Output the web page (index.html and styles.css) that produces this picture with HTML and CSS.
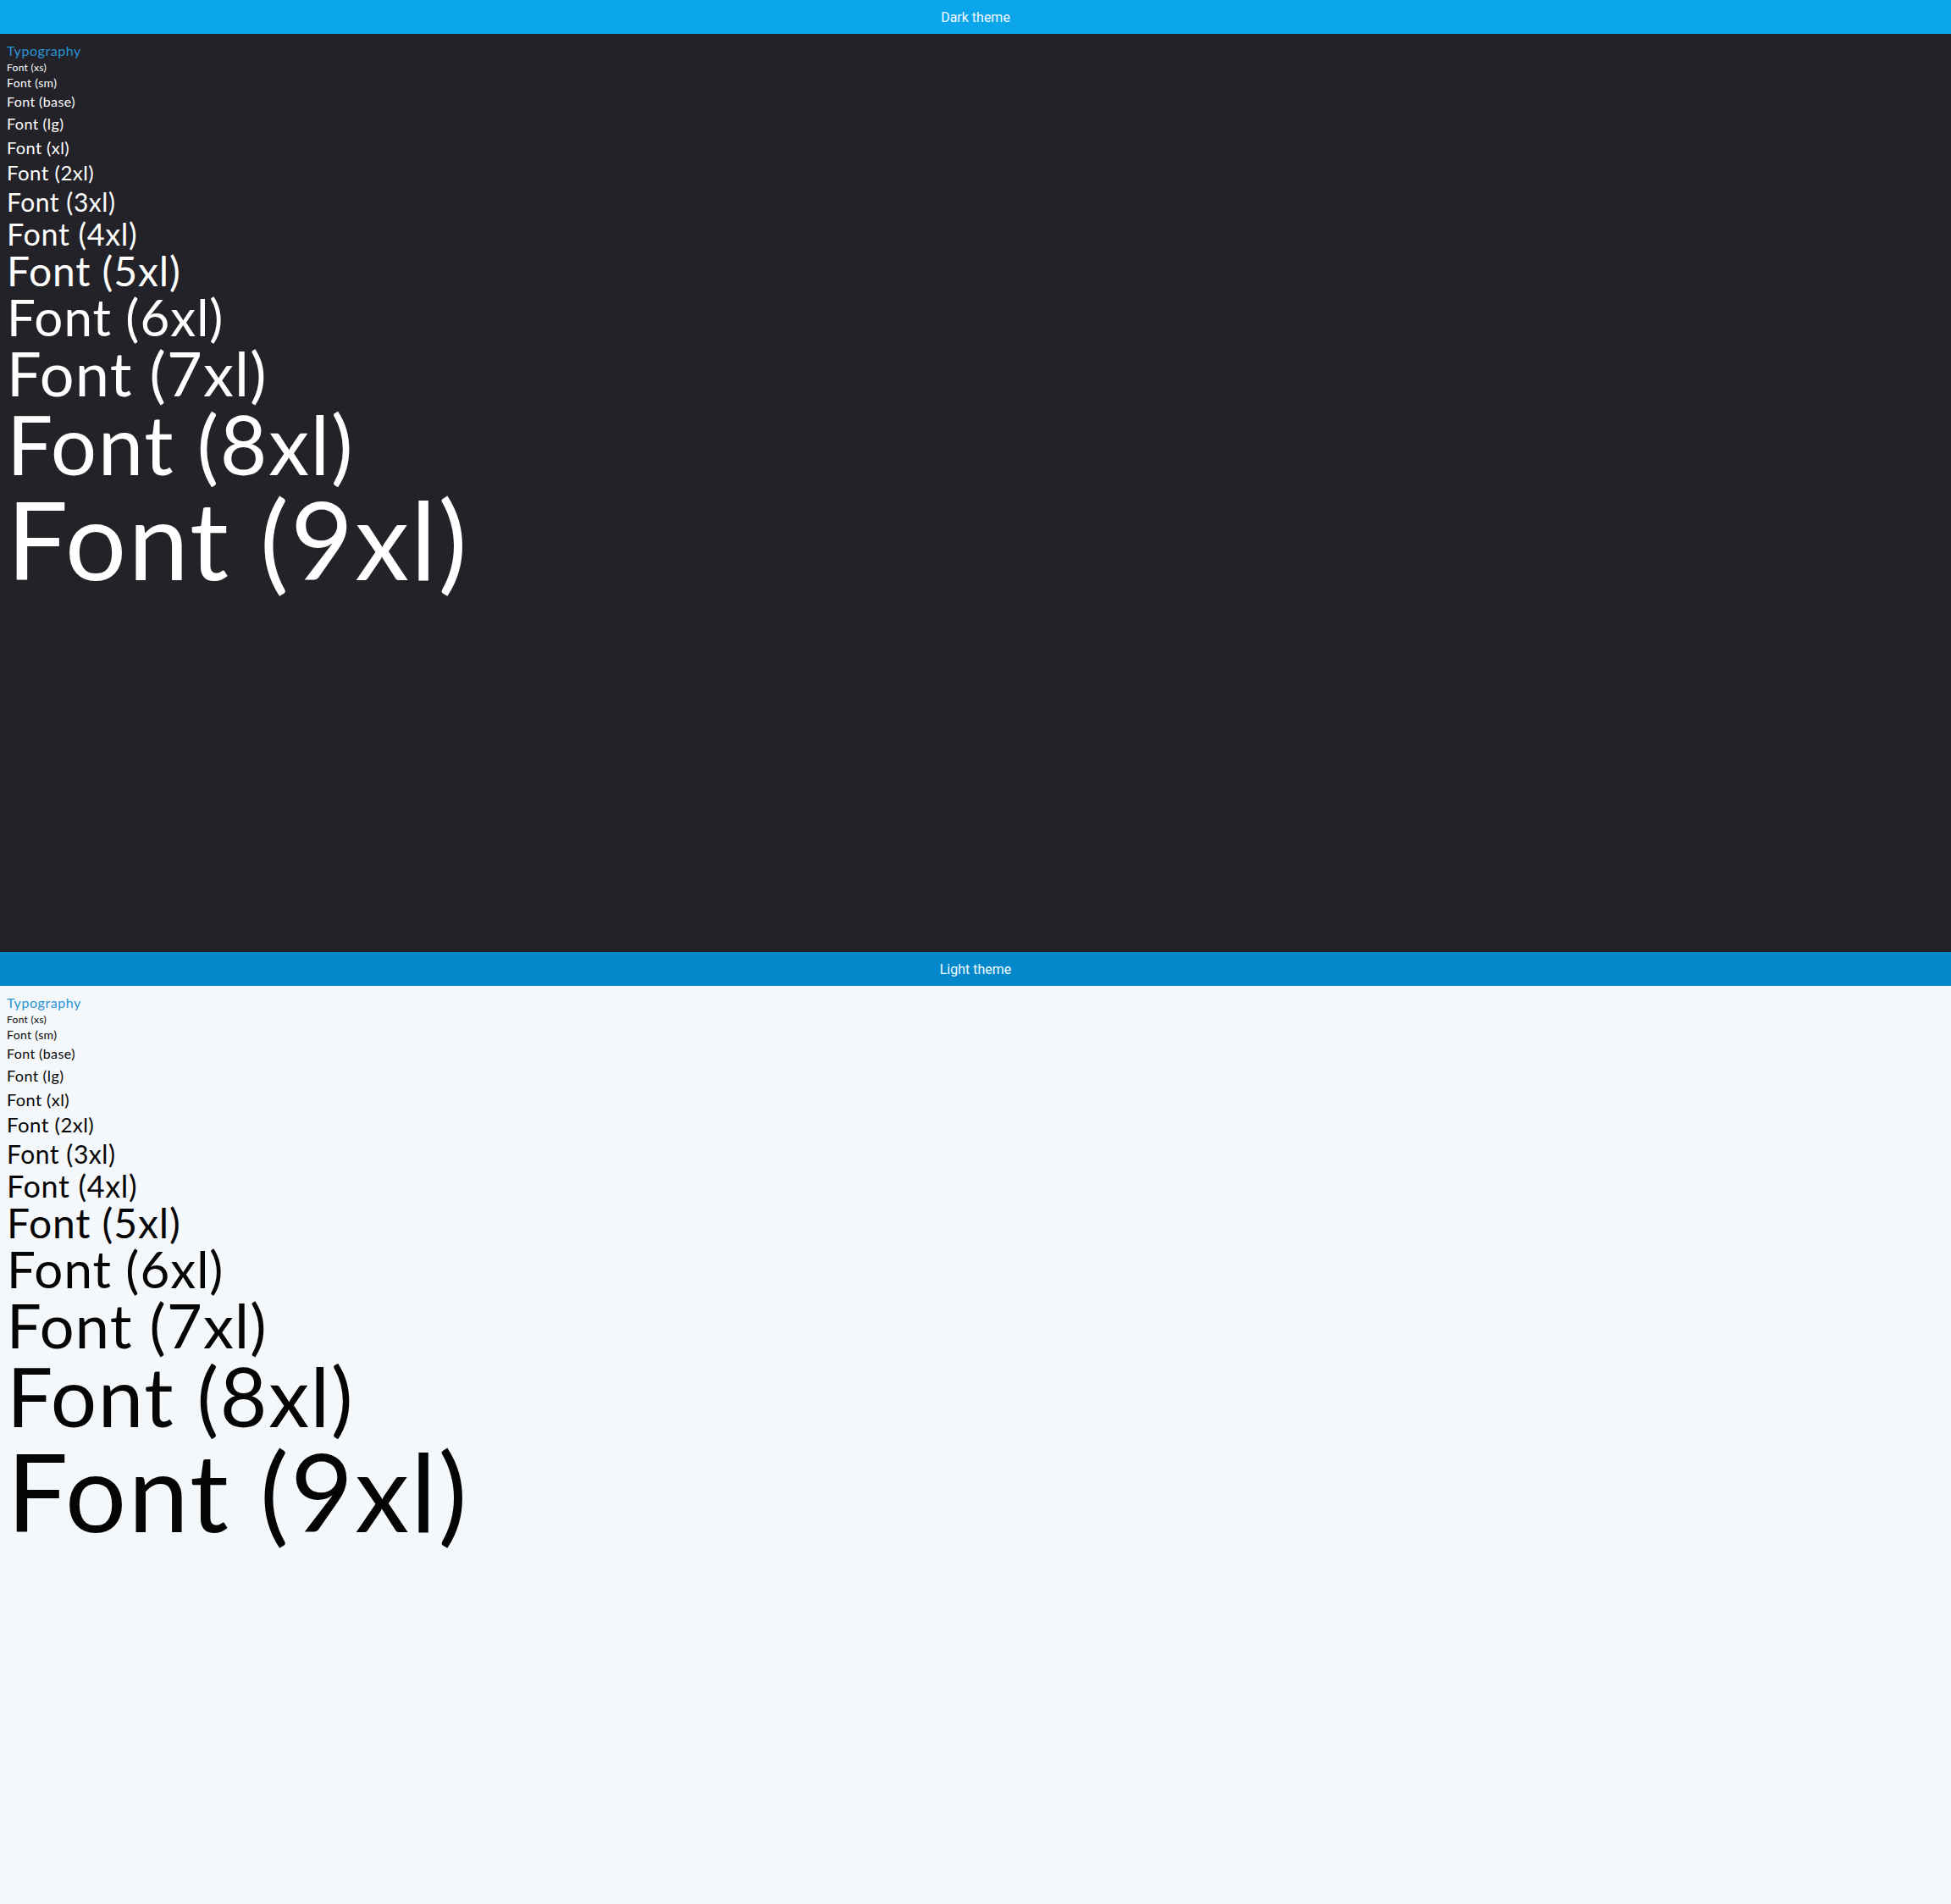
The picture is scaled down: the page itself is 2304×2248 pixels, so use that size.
FILE: index.html
```html
<!DOCTYPE html>
<html lang="en">
<head>
<meta charset="utf-8">
<title>Typography themes</title>
<link rel="stylesheet" href="styles.css">
</head>
<body>
  <section class="theme theme-dark">
    <header class="theme-bar">Dark theme</header>
    <div class="theme-body">
      <h2 class="title">Typography</h2>
      <p class="t-xs">Font (xs)</p>
      <p class="t-sm">Font (sm)</p>
      <p class="t-base">Font (base)</p>
      <p class="t-lg">Font (lg)</p>
      <p class="t-xl">Font (xl)</p>
      <p class="t-2xl">Font (2xl)</p>
      <p class="t-3xl">Font (3xl)</p>
      <p class="t-4xl">Font (4xl)</p>
      <p class="t-5xl">Font (5xl)</p>
      <p class="t-6xl">Font (6xl)</p>
      <p class="t-7xl">Font (7xl)</p>
      <p class="t-8xl">Font (8xl)</p>
      <p class="t-9xl">Font (9xl)</p>
    </div>
  </section>
  <section class="theme theme-light">
    <header class="theme-bar">Light theme</header>
    <div class="theme-body">
      <h2 class="title">Typography</h2>
      <p class="t-xs">Font (xs)</p>
      <p class="t-sm">Font (sm)</p>
      <p class="t-base">Font (base)</p>
      <p class="t-lg">Font (lg)</p>
      <p class="t-xl">Font (xl)</p>
      <p class="t-2xl">Font (2xl)</p>
      <p class="t-3xl">Font (3xl)</p>
      <p class="t-4xl">Font (4xl)</p>
      <p class="t-5xl">Font (5xl)</p>
      <p class="t-6xl">Font (6xl)</p>
      <p class="t-7xl">Font (7xl)</p>
      <p class="t-8xl">Font (8xl)</p>
      <p class="t-9xl">Font (9xl)</p>
    </div>
  </section>
</body>
</html>
```
FILE: styles.css
```css
* { box-sizing: border-box; }
html, body { margin: 0; padding: 0; }
body {
  font-family: Lato, "Noto Sans", sans-serif;
  height: 2248px;
  display: flex;
  flex-direction: column;
}
.theme {
  height: 1124px;
  display: flex;
  flex-direction: column;
}
.theme-bar {
  height: 40px;
  display: flex;
  align-items: center;
  justify-content: center;
  font-family: Roboto, "Noto Sans", sans-serif;
  font-size: 16px;
  color: #f4faff;
  flex: none;
}
.theme-body {
  flex: 1;
  padding: 8px;
}
.theme-dark { background: #232228; color: #ffffff; }
.theme-dark .theme-bar { background: #0ba5ec; }
.theme-light { background: #f5f8fb; color: #050505; }
.theme-light .theme-bar { background: #0288cb; }

.title {
  margin: 0;
  font-weight: 400;
  font-size: 16px;
  line-height: 24px;
  color: #2a93d5;
  letter-spacing: 0.035em;
}
.theme-body p { margin: 0; white-space: nowrap; }
.t-xs { font-size: 12px; line-height: 16px; letter-spacing: 0.025em; }
.t-sm { font-size: 14px; line-height: 20px; letter-spacing: 0.025em; }
.t-base { font-size: 16px; line-height: 24px; letter-spacing: 0.025em; }
.t-lg { font-size: 18px; line-height: 28px; letter-spacing: 0.022em; }
.t-xl { font-size: 20px; line-height: 28px; letter-spacing: 0.02em; }
.t-2xl { font-size: 24px; line-height: 32px; letter-spacing: 0.02em; }
.t-3xl { font-size: 30px; line-height: 36px; letter-spacing: 0.018em; }
.t-4xl { font-size: 36px; line-height: 40px; letter-spacing: 0.018em; }
.t-5xl { font-size: 48px; line-height: 1; letter-spacing: 0.018em; }
.t-6xl { font-size: 60px; line-height: 1; letter-spacing: 0.017em; }
.t-7xl { font-size: 72px; line-height: 1; letter-spacing: 0.017em; }
.t-8xl { font-size: 96px; line-height: 1; letter-spacing: 0.017em; }
.t-9xl { font-size: 128px; line-height: 1; letter-spacing: 0.016em; }
```
